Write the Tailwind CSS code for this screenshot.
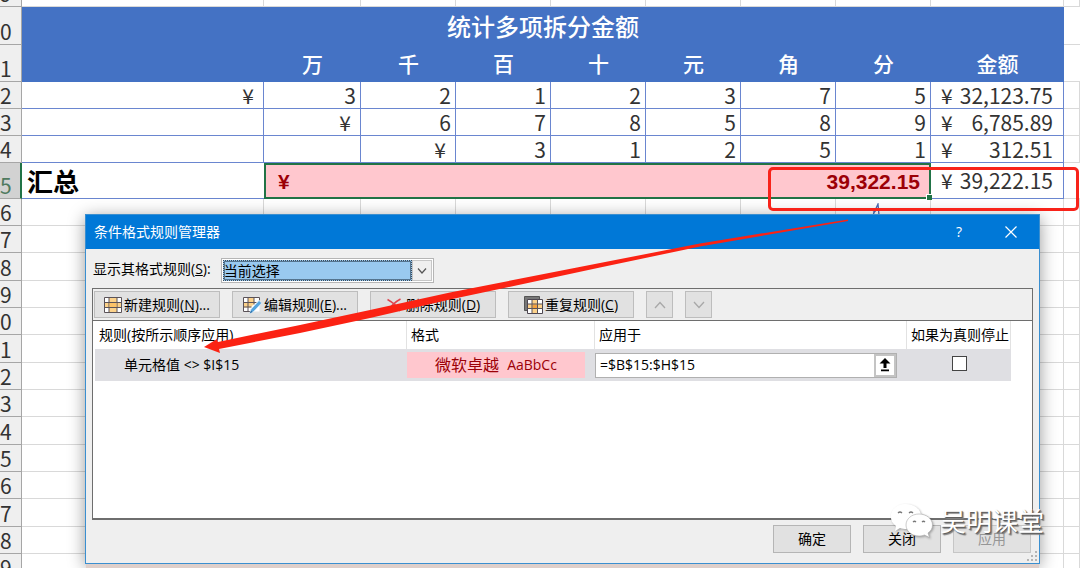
<!DOCTYPE html>
<html lang="zh-CN">
<head>
<meta charset="utf-8">
<title>条件格式规则管理器</title>
<script src="https://cdn.jsdelivr.net/npm/@tailwindcss/browser@4"></script>
</head>
<body class="relative h-screen overflow-hidden bg-white font-['Noto_Sans_CJK_SC',sans-serif] text-[#333]">

<!-- Worksheet -->
<table class="w-full table-fixed border-separate border-spacing-0 text-right text-[21px] leading-[21px] [&_td]:p-0 [&_th]:p-0 [&_td]:align-bottom [&_th]:align-bottom">
  <colgroup>
    <col class="w-[22px]"><col><col class="w-[97px]"><col class="w-[95px]"><col class="w-[95px]"><col class="w-[95px]"><col class="w-[95px]"><col class="w-[95px]"><col class="w-[95px]"><col class="w-[133px]"><col class="w-4">
  </colgroup>
  <tbody id="sheet">
    <tr class="h-[7px] [&>td]:border-r [&>td]:border-b [&>td]:border-[#d9d9d9]">
      <th class="border-r border-b border-[#a6a6a6] bg-[#efefef]"><div class="flex h-[6px] items-end overflow-hidden pb-0.5 font-normal"><span>9</span></div></th>
      <td></td><td></td><td></td><td></td><td></td><td></td><td></td><td></td><td></td><td></td>
    </tr>
    <tr class="h-[38px]">
      <th class="border-r border-b border-[#a6a6a6] bg-[#efefef] pb-0.5! text-left font-normal">0</th>
      <td colspan="9" class="bg-[#4472c4] text-center align-middle! text-2xl leading-6 font-medium text-white">统计多项拆分金额</td>
      <td class="border-b border-[#d9d9d9]"></td>
    </tr>
    <tr class="h-[37px] [&>td]:bg-[#4472c4] [&>td]:pb-2 [&>td]:text-center [&>td]:font-medium [&>td]:text-white">
      <th class="border-r border-b border-[#a6a6a6] bg-[#efefef] pb-0.5! text-left font-normal">1</th>
      <td></td><td>万</td><td>千</td><td>百</td><td>十</td><td>元</td><td>角</td><td>分</td><td>金额</td>
      <td class="border-b border-[#d9d9d9] bg-white!"></td>
    </tr>
    <tr class="h-[27px] [&>td]:border-r [&>td]:border-b [&>td]:border-[#6a86d0] [&>td]:pr-1 [&>td]:pb-0.5">
      <th class="border-r border-b border-[#a6a6a6] bg-[#efefef] pb-0.5! text-left font-normal">2</th>
      <td class="pr-[9px]!">¥</td><td>3</td><td>2</td><td>1</td><td>2</td><td>3</td><td>7</td><td>5</td>
      <td><div class="flex justify-between pr-1.5 pl-2.5"><span>¥</span><span>32,123.75</span></div></td>
      <td class="border-[#d9d9d9]!"></td>
    </tr>
    <tr class="h-[27px] [&>td]:border-r [&>td]:border-b [&>td]:border-[#6a86d0] [&>td]:pr-1 [&>td]:pb-0.5">
      <th class="border-r border-b border-[#a6a6a6] bg-[#efefef] pb-0.5! text-left font-normal">3</th>
      <td></td><td class="pr-[9px]!">¥</td><td>6</td><td>7</td><td>8</td><td>5</td><td>8</td><td>9</td>
      <td><div class="flex justify-between pr-1.5 pl-2.5"><span>¥</span><span>6,785.89</span></div></td>
      <td class="border-[#d9d9d9]!"></td>
    </tr>
    <tr class="h-[27px] [&>td]:border-r [&>td]:border-b [&>td]:border-[#6a86d0] [&>td]:pr-1 [&>td]:pb-0.5">
      <th class="border-r border-b border-[#a6a6a6] bg-[#efefef] pb-0.5! text-left font-normal">4</th>
      <td></td><td></td><td class="pr-[9px]!">¥</td><td>3</td><td>1</td><td>2</td><td>5</td><td>1</td>
      <td><div class="flex justify-between pr-1.5 pl-2.5"><span>¥</span><span>312.51</span></div></td>
      <td class="border-[#d9d9d9]!"></td>
    </tr>
    <tr class="h-9">
      <th class="border-r-2 border-b border-r-[#217346] border-b-[#a6a6a6] bg-[#d2d2d2] pb-0.5! text-left font-normal text-[#4f7a5f]">5</th>
      <td class="border-b border-[#6a86d0] pl-[5px]! text-left align-middle! text-[26px] leading-[26px] font-bold text-black">汇总</td>
      <td colspan="7" class="relative border-2 border-[#217346] bg-[#ffc7ce] align-middle! font-['Liberation_Sans',sans-serif] font-bold text-[#9c0006]">
        <div class="flex justify-between pr-[9px] pl-3"><span>¥</span><span>39,322.15</span></div>
        <span class="absolute -right-[3px] -bottom-[3px] size-[6px] border-t border-l border-white bg-[#217346]"></span>
      </td>
      <td class="border-r border-b border-[#6a86d0] align-middle!"><div class="flex justify-between pr-2.5 pl-2.5"><span>¥</span><span>39,222.15</span></div></td>
      <td class="border-b border-[#d9d9d9]"></td>
    </tr>
  </tbody>
</table>
<script>
  // Empty worksheet rows below the totals
  const sheet = document.getElementById('sheet');
  '67890123456789'.split('').forEach((n, i) => {
    const tr = document.createElement('tr');
    tr.className = (i % 3 === 2 ? 'h-7' : 'h-[27px]') + ' [&>td]:border-r [&>td]:border-b [&>td]:border-[#d9d9d9]';
    tr.innerHTML = '<th class="border-r border-b border-[#a6a6a6] bg-[#efefef] pb-0.5! text-left font-normal">' + n + '</th>' + '<td></td>'.repeat(10);
    sheet.append(tr);
  });
</script>

<!-- Pen mark peeking out above the dialog -->
<svg class="absolute top-[203px] left-[870px] h-3 w-3" viewBox="0 0 12 12" fill="none" stroke="#4a68b0" stroke-width="1.3"><path d="M3 12 8 1l1 11M3 9l3-1"/></svg>

<!-- Rule manager dialog -->
<section role="dialog" aria-labelledby="dlg-title" class="absolute top-[214px] right-10 left-[85px] flex h-[350px] flex-col border border-[#3a8fd0] bg-[#efefef] font-['Open_Sans','Noto_Sans_CJK_SC',sans-serif] text-sm leading-5 text-black shadow-[0_6px_0_-1px_#decfca,0_3px_16px_rgba(0,0,0,0.4)]">
  <header class="flex h-[34px] shrink-0 items-center justify-between bg-[#0078d7] pl-2 text-white">
    <h1 id="dlg-title">条件格式规则管理器</h1>
    <div class="flex pr-0.5">
      <button type="button" aria-label="帮助" class="w-[52px]">?</button>
      <button type="button" aria-label="关闭窗口" class="flex w-[52px] items-center justify-center"><svg class="size-3" viewBox="0 0 12 12" stroke="#fff" stroke-width="1.2"><path d="M.5.5l11 11M11.5.5l-11 11"/></svg></button>
    </div>
  </header>

  <div class="flex h-[39px] shrink-0 items-center gap-2.5 pl-[7px]">
    <label for="scope">显示其格式规则(<u>S</u>):</label>
    <div class="mt-1 flex h-[25px] w-[213px] border border-[#b5b5b5] bg-white p-px">
      <select id="scope" class="min-w-0 flex-1 appearance-none border border-dotted border-[#3c4a58] bg-[#99c9ef] leading-5 outline-1 -outline-offset-2 outline-[#557590]"><option>当前选择</option></select>
      <span class="pointer-events-none flex w-5 items-center justify-center border border-[#c6c6c6] bg-[#efefef]"><svg class="h-2 w-2.5" viewBox="0 0 10 8" fill="none" stroke="#555" stroke-width="1.2"><path d="M1 1.500 5 6l4-4.500"/></svg></span>
    </div>
  </div>

  <div class="mr-[6px] ml-1.5 flex min-h-0 flex-1 flex-col border border-b-2 border-[#6e6e6e]">
    <div class="flex h-8 shrink-0 items-center gap-3 border-b border-[#6e6e6e] pl-px">
      <button type="button" class="flex h-[27px] w-[126px] items-center justify-center gap-0.5 border border-[#bdbdbd] bg-[#e1e1e1]">
        <svg class="h-4 w-[18px]" viewBox="0 0 18 16"><path fill="#fff" d="M.5.5h17v15H.5z"/><path fill="#fcd28a" d="M5 .5h8v15H5zM.5 5.500h17v5H.5z"/><path fill="none" stroke="#5b5358" d="M.5.5h17v15H.5zM5 .5v15M13 .5v15M.5 5.500h17M.5 10.500h17"/><path fill="#fcc368" d="M5.500 6h7v4h-7z"/></svg>
        <span>新建规则(<u>N</u>)...</span>
      </button>
      <button type="button" class="flex h-[27px] w-[126px] items-center justify-center gap-0.5 border border-[#bdbdbd] bg-[#e1e1e1]">
        <svg class="h-[18px] w-[19px]" viewBox="0 0 19 18"><path fill="#fff" d="M.5 1.500h16v14H.5z"/><path fill="#fcd28a" d="M5 1.500h6v5H5zM.5 6.500h12l-5 5H.5z"/><path fill="none" stroke="#5b5358" d="M7 15.500H.5v-14h16v3M5 1.500v14M11 1.500v7M.5 6.500h13M.5 11h8"/><path fill="#56a5de" stroke="#e8f1f8" stroke-width=".7" d="M16 4.500l2.700 2.500-8 8.500-4 2 1.300-4.300z"/><path fill="#2d6fa8" d="M8 14.500l1.700 1.600-3 1.400z"/></svg>
        <span>编辑规则(<u>E</u>)...</span>
      </button>
      <button type="button" class="flex h-[27px] w-[126px] items-center justify-center gap-1 border border-[#bdbdbd] bg-[#e1e1e1]">
        <svg class="h-4 w-4" viewBox="0 0 16 16" fill="none" stroke="#e0444f" stroke-width="1.500"><path d="M1.500 2.500C6 5 11 9 14 14M14.500 2C9 5 5 9 2 14"/></svg>
        <span>删除规则(<u>D</u>)</span>
      </button>
      <button type="button" class="flex h-[27px] w-[126px] items-center justify-center gap-0.5 border border-[#bdbdbd] bg-[#e1e1e1]">
        <svg class="h-[18px] w-[19px]" viewBox="0 0 19 18"><path fill="#777" stroke="#555" d="M.5.5h15v14H.5z"/><path fill="#fff" stroke="#4d4650" d="M3.500 3.500h15v14h-15z"/><path fill="#fcd28a" d="M8 4h5.500v13H8zM4 8h14v5H4z"/><path fill="#f5a13c" d="M8.500 8.500h5v4h-5z"/><path stroke="#5b5358" d="M8 3.500v14M13.500 3.500v14M3.500 8h15M3.500 12.500h15"/></svg>
        <span>重复规则(<u>C</u>)</span>
      </button>
      <button type="button" aria-label="上移" disabled class="flex size-[27px] items-center justify-center border border-[#bdbdbd] bg-[#e1e1e1]"><svg class="h-2 w-3" viewBox="0 0 12 8" fill="none" stroke="#a8a8a8" stroke-width="1.300"><path d="M1 7l5-5.500L11 7"/></svg></button>
      <button type="button" aria-label="下移" disabled class="flex size-[27px] items-center justify-center border border-[#bdbdbd] bg-[#e1e1e1]"><svg class="h-2 w-3" viewBox="0 0 12 8" fill="none" stroke="#a8a8a8" stroke-width="1.300"><path d="M1 1l5 5.500L11 1"/></svg></button>
    </div>

    <div class="min-h-0 flex-1 bg-white pr-[21px] pl-0.5">
      <table class="w-full table-fixed border-separate border-spacing-0 text-left [&_th]:p-0 [&_td]:p-0">
        <colgroup><col><col class="w-[188px]"><col class="w-[312px]"><col class="w-[104px]"></colgroup>
        <thead>
          <tr class="h-7 [&>th]:border-r [&>th]:border-[#e2e2e2] [&>th]:pl-1 [&>th]:font-normal [&>th]:whitespace-nowrap">
            <th>规则(按所示顺序应用)</th><th>格式</th><th>应用于</th><th>如果为真则停止</th>
          </tr>
        </thead>
        <tbody>
          <tr class="h-8 bg-[#dfdfe3]">
            <td class="pl-[29px]!">单元格值 &lt;&gt; $I$15</td>
            <td><div class="mr-2.5 flex h-[26px] items-center justify-center gap-2 bg-[#ffc7ce] text-[#9c0006]"><span class="text-base">微软卓越</span><span>AaBbCc</span></div></td>
            <td><div class="mr-2.5 flex h-[25px] border border-[#b0b0b0] bg-white">
              <input type="text" aria-label="应用于" value="=$B$15:$H$15" class="min-w-0 flex-1 pl-1">
              <button type="button" aria-label="折叠对话框" class="flex w-[22px] items-center justify-center border-2 border-[#c4c4c4] bg-white"><svg class="h-3.5 w-3" viewBox="0 0 12 14"><path d="M6 0l5.500 5.500H7.500V10h-3V5.500H.5zM2 11.500h8v1.700H2z"/></svg></button>
            </div></td>
            <td class="text-center"><input type="checkbox" aria-label="如果为真则停止" class="mb-1 size-[15px] appearance-none border border-[#444] bg-white align-middle"></td>
          </tr>
        </tbody>
      </table>
    </div>
  </div>

  <footer class="flex h-[43px] shrink-0 justify-end gap-3 pt-[5px] pr-2">
    <button type="button" class="h-7 w-[78px] border border-[#b5b5b5] bg-[#e1e1e1]">确定</button>
    <button type="button" class="h-7 w-[78px] border border-[#b5b5b5] bg-[#e1e1e1]">关闭</button>
    <button type="button" disabled class="h-7 w-[78px] border border-[#c6c6c6] bg-[#e1e1e1] text-[#969696]">应用</button>
  </footer>
  <svg class="absolute right-0.5 bottom-0.5 size-2.5" viewBox="0 0 10 10" fill="#b4b4b4"><path d="M8 0h2v2H8zM4 4h2v2H4zM8 4h2v2H8zM0 8h2v2H0zM4 8h2v2H4zM8 8h2v2H8z"/></svg>
</section>

<!-- Annotations -->
<div class="pointer-events-none absolute top-[167px] right-[1px] left-[768px] h-11 rounded-[5px] border-[3px] border-[#f8231a]"></div>
<svg class="pointer-events-none absolute top-[214px] left-[200px] h-[145px] w-[652px]" viewBox="200 214 652 145"><path fill="#fb2213" d="M204 347 217 339 218 342 300 325 370 310 450 292.500 600 263 700 243.500 848 219.500V221L700 246.500 600 267.500 450 299.500 370 318 300 333 219 349 220 353z"/></svg>

<!-- Watermark -->
<div class="pointer-events-none absolute right-9 bottom-7 flex items-center gap-1.5 text-[26px] leading-10 text-white">
  <svg class="h-10 w-[44px] overflow-visible drop-shadow-[1px_1px_1px_rgba(0,0,0,0.3)]" viewBox="0 0 44 40" fill="#fff"><path d="M16 4C7 4 1 10 1 17c0 4 2 7 5 9l-1 5 5-3c2 .7 4 1 7 1z"/><ellipse cx="16" cy="16" rx="15" ry="12"/><path stroke="#aaa" stroke-width=".6" d="M29 14c-7.500 0-13 5-13 11s5.500 11 13 11c2 0 4-.3 5.500-1l5 2.500-1.500-4.500c3-2 4.500-5 4.500-8 0-6-6-11-13.500-11z"/><path fill="none" stroke="#777" stroke-width="1.200" d="M8 13q2-2 4 0M19 13q2-2 4 0M23 22q1.500-1.500 3 0M32 22q1.500-1.500 3 0"/></svg>
  <span class="[text-shadow:1px_1px_1px_#555,2px_2px_1px_#888]">吴明课堂</span>
</div>
</body>
</html>
